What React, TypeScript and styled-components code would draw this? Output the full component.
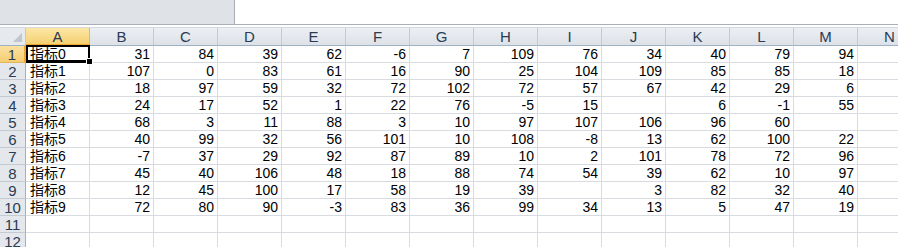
import React from 'react';
import styled, { createGlobalStyle, css } from 'styled-components';

const GlobalStyle = createGlobalStyle`
  html, body {
    margin: 0;
    padding: 0;
    background: #ffffff;
    overflow: hidden;
  }
`;

const FONT = `"Liberation Sans Narrow", "Liberation Sans", "Noto Sans CJK SC", sans-serif`;

const Window = styled.div`
  width: 898px;
  height: 247px;
  overflow: hidden;
  font-family: ${FONT};
  font-size: 14px;
  color: #000;
`;

const FormulaBar = styled.div`
  display: flex;
  height: 24px;
  border-bottom: 1px solid #a9afb8;
`;

const NameBox = styled.div`
  width: 234px;
  background: #dfe3e8;
  border-right: 1px solid #a7aeb8;
`;

const FormulaInput = styled.div`
  flex: 1;
  background: #ffffff;
`;

const Gap = styled.div`
  height: 2px;
  background: #ffffff;
  border-bottom: 1px solid #d5d9de;
`;

const Grid = styled.div`
  display: grid;
  grid-template-columns: 26px repeat(14, 64px);
  grid-auto-rows: 17px;
  grid-template-rows: 18px;
`;

const Corner = styled.div`
  position: relative;
  background: #e6e9ee;
  border-right: 1px solid #c4cad3;
  border-bottom: 1px solid #9fb0c4;
  box-sizing: border-box;

  &::after {
    content: '';
    position: absolute;
    right: 3px;
    bottom: 3px;
    width: 0;
    height: 0;
    border-left: 9px solid transparent;
    border-bottom: 9px solid #c0c6ce;
  }
`;

const ColHead = styled.div<{ $active?: boolean }>`
  box-sizing: border-box;
  display: flex;
  align-items: center;
  justify-content: center;
  background: linear-gradient(#eceff3, #dde2e8);
  border-right: 1px solid #c4cad3;
  border-bottom: 1px solid #9fb0c4;
  color: #2a3b52;
  font-size: 15px;
  ${(p) =>
    p.$active &&
    css`
      background: linear-gradient(#fbe7a6, #f6d072);
      border-right: 1px solid #e3b85d;
      border-bottom: 2px solid #f0a630;
    `}
`;

const RowHead = styled.div<{ $active?: boolean }>`
  box-sizing: border-box;
  display: flex;
  align-items: center;
  justify-content: center;
  background: #e4e8ed;
  border-right: 1px solid #9fb0c4;
  border-bottom: 1px solid #c4cad3;
  color: #2a3b52;
  font-size: 15px;
  ${(p) =>
    p.$active &&
    css`
      background: linear-gradient(#fbe2a0, #f5cd72);
      border-right: 2px solid #f0a630;
      border-bottom: 1px solid #e3b85d;
    `}
`;

const Cell = styled.div<{ $text?: boolean }>`
  position: relative;
  box-sizing: border-box;
  border-right: 1px solid #d8dbe0;
  border-bottom: 1px solid #d8dbe0;
  padding: ${(p) => (p.$text ? '0 3px 0 4px' : '0 3px')};
  line-height: 17px;
  white-space: nowrap;
  text-align: ${(p) => (p.$text ? 'left' : 'right')};
  font-size: 14px;
`;

const Selection = styled.div`
  position: absolute;
  z-index: 2;
  left: 0;
  top: -1px;
  right: -1px;
  bottom: -1px;
  border: 2px solid #000;
  border-bottom-width: 3px;
  pointer-events: none;
`;

const FillHandle = styled.div`
  position: absolute;
  right: -5px;
  bottom: -5px;
  width: 5px;
  height: 5px;
  background: #000;
  border: 1px solid #fff;
`;

const COLS = ['A', 'B', 'C', 'D', 'E', 'F', 'G', 'H', 'I', 'J', 'K', 'L', 'M', 'N'];

const DATA: (number | '')[][] = [
  [31, 84, 39, 62, -6, 7, 109, 76, 34, 40, 79, 94],
  [107, 0, 83, 61, 16, 90, 25, 104, 109, 85, 85, 18],
  [18, 97, 59, 32, 72, 102, 72, 57, 67, 42, 29, 6],
  [24, 17, 52, 1, 22, 76, -5, 15, '', 6, -1, 55],
  [68, 3, 11, 88, 3, 10, 97, 107, 106, 96, 60, ''],
  [40, 99, 32, 56, 101, 10, 108, -8, 13, 62, 100, 22],
  [-7, 37, 29, 92, 87, 89, 10, 2, 101, 78, 72, 96],
  [45, 40, 106, 48, 18, 88, 74, 54, 39, 62, 10, 97],
  [12, 45, 100, 17, 58, 19, 39, '', 3, 82, 32, 40],
  [72, 80, 90, -3, 83, 36, 99, 34, 13, 5, 47, 19],
];

const ROWS = 12;

export default function App() {
  return (
    <Window>
      <GlobalStyle />
      <FormulaBar>
        <NameBox />
        <FormulaInput />
      </FormulaBar>
      <Gap />
      <Grid>
        <Corner />
        {COLS.map((c) => (
          <ColHead key={c} $active={c === 'A'}>
            {c}
          </ColHead>
        ))}
        {Array.from({ length: ROWS }, (_, r) => {
          const values = DATA[r];
          return (
            <React.Fragment key={r}>
              <RowHead $active={r === 0}>{r + 1}</RowHead>
              <Cell $text>
                {values ? `指标${r}` : ''}
                {r === 0 && (
                  <Selection>
                    <FillHandle />
                  </Selection>
                )}
              </Cell>
              {Array.from({ length: 13 }, (_, c) => (
                <Cell key={c}>{values && c < 12 ? values[c] : ''}</Cell>
              ))}
            </React.Fragment>
          );
        })}
      </Grid>
    </Window>
  );
}
